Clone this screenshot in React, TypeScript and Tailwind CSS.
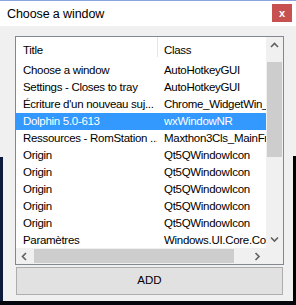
import React from 'react';

const rows: { title: string; cls: string; selected?: boolean }[] = [
  { title: 'Choose a window', cls: 'AutoHotkeyGUI' },
  { title: 'Settings - Closes to tray', cls: 'AutoHotkeyGUI' },
  { title: "Écriture d'un nouveau suj...", cls: 'Chrome_WidgetWin_1' },
  { title: 'Dolphin 5.0-613', cls: 'wxWindowNR', selected: true },
  { title: 'Ressources - RomStation ...', cls: 'Maxthon3Cls_MainFrame' },
  { title: 'Origin', cls: 'Qt5QWindowIcon' },
  { title: 'Origin', cls: 'Qt5QWindowIcon' },
  { title: 'Origin', cls: 'Qt5QWindowIcon' },
  { title: 'Origin', cls: 'Qt5QWindowIcon' },
  { title: 'Origin', cls: 'Qt5QWindowIcon' },
  { title: 'Paramètres', cls: 'Windows.UI.Core.CoreWindow' },
];

// small scrollbar chevron
const Chevron = ({ dir }: { dir: 'up' | 'down' | 'left' | 'right' }) => {
  const d = {
    up: 'M1 5 L4.5 1.5 L8 5',
    down: 'M1 1.5 L4.5 5 L8 1.5',
    left: 'M5 1 L1.5 4.5 L5 8',
    right: 'M1.5 1 L5 4.5 L1.5 8',
  }[dir];
  const vertical = dir === 'up' || dir === 'down';
  return (
    <svg width={vertical ? 9 : 7} height={vertical ? 7 : 9} viewBox={vertical ? '0 0 9 7' : '0 0 7 9'}>
      <path d={d} fill="none" stroke="#606060" strokeWidth="1.6" />
    </svg>
  );
};

export default function App() {
  return (
    <div
      className="w-[296px] h-[305px] flex flex-col overflow-hidden bg-[#0b1226] text-black"
      style={{ fontFamily: '"Liberation Sans", Arial, sans-serif' }}
    >
      {/* title bar */}
      <div className="h-[26px] shrink-0 bg-white border-t border-[#8aa4e0] flex items-start justify-between">
        <span className="ml-[7px] mt-[5px] text-[12.5px] leading-[16px] tracking-[-0.1px] text-black">Choose a window</span>
        <div className="w-[20px] h-[18px] mt-[3px] mr-[4px] bg-[#c75050] flex items-center justify-center">
          <span className="text-white text-[11px] font-bold leading-none">x</span>
        </div>
      </div>

      <div className="flex h-[275px] shrink-0">
        {/* left strip (behind window) */}
        <div className="w-[3px] flex flex-col">
          <div className="h-[131px] bg-[#f0f0f0]" />
          <div className="flex-1 bg-[#0d1a3d]" />
        </div>

        {/* window body */}
        <div className="w-[290px] bg-[#f0f0f0] flex flex-col pt-[10px]">
          <div className="ml-[12px] w-[269px] h-[229px] border border-[#828790] bg-white grid grid-cols-[250px_17px] grid-rows-[211px_16px] text-[11.5px] tracking-[-0.3px]">
            {/* list content */}
            <div className="flex flex-col overflow-hidden">
              <div className="h-[25px] shrink-0 flex">
                <div className="w-[141px] pl-[7px] flex items-center pt-[2px]">Title</div>
                <div className="w-px h-[20px] bg-[#e5e5e5]" />
                <div className="flex-1 pl-[6px] flex items-center pt-[2px]">Class</div>
              </div>
              {rows.map((r, i) => (
                <div
                  key={i}
                  className={`h-[17px] shrink-0 flex items-center pt-[1px] whitespace-nowrap ${
                    r.selected ? 'bg-[#3399ff] text-white' : ''
                  }`}
                >
                  <div className="w-[141px] pl-[7px] overflow-hidden">{r.title}</div>
                  <div className="flex-1 pl-[7px] overflow-hidden">{r.cls}</div>
                </div>
              ))}
            </div>

            {/* vertical scrollbar */}
            <div className="bg-[#f0f0f0] flex flex-col">
              <div className="h-[17px] flex items-center justify-center">
                <Chevron dir="up" />
              </div>
              <div className="mt-[8px] mx-auto w-[15px] h-[95px] bg-[#cdcdcd]" />
              <div className="flex-1" />
              <div className="h-[17px] flex items-center justify-center">
                <Chevron dir="down" />
              </div>
            </div>

            {/* horizontal scrollbar */}
            <div className="bg-[#f0f0f0] flex items-center">
              <div className="w-[17px] h-full flex items-center justify-center">
                <Chevron dir="left" />
              </div>
              <div className="h-[14px] w-[200px] ml-px bg-[#cdcdcd]" />
              <div className="flex-1" />
              <div className="w-[17px] h-full flex items-center justify-center">
                <Chevron dir="right" />
              </div>
            </div>
            <div className="bg-[#f0f0f0]" />
          </div>

          <button className="ml-[13px] mt-[2px] w-[267px] h-[28px] bg-[#e1e1e1] border border-[#adadad] text-[11.5px] text-black flex items-center justify-center">
            ADD
          </button>
        </div>

        {/* right strip */}
        <div className="w-[3px] flex flex-col">
          <div className="h-[130px] bg-[#f0f0f0]" />
          <div className="flex-1 bg-black" />
        </div>
      </div>

      <div className="flex-1 bg-[#05070d]" />
    </div>
  );
}
